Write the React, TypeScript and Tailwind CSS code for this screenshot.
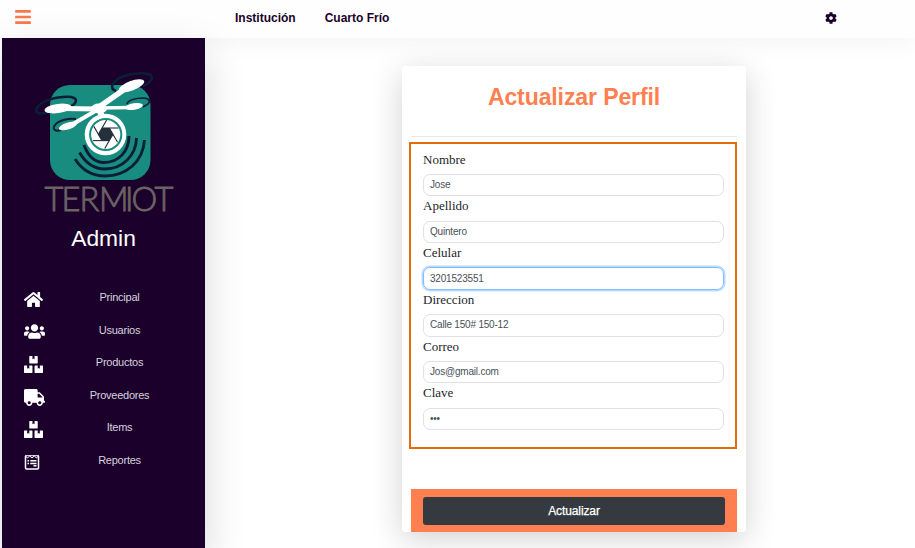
import { FaBars, FaHome, FaUsers, FaBoxes, FaTruck, FaCog } from "react-icons/fa";
import type { ReactNode } from "react";

function Logo() {
  return (
    <svg width="144" height="152" viewBox="32 68 144 152" className="block overflow-visible">
      <rect x="50" y="85" width="100.500" height="95" rx="20" fill="#198c80" />
      <g fill="none" stroke="#0b1e38">
        <g strokeWidth="2.900">
          <path d="M129 136C129 151 119 162.500 104 162.500C95 162.500 88 156 84 145" />
          <path d="M136.500 138C136 156 122 169 105 169C94 169 85 162 79.500 152.500" />
          <path d="M144.500 140C143 162 126 176 105 176C92 176 82 170 75 159" />
        </g>
        <path d="M48 112C39 115 34 113 37 108C41 102 51 98 63 97C74 96 78 99 75 103C74 105 72 106 69 107" strokeWidth="2.600" />
        <path d="M116 91C110 89 111 84 118 79C126 74 140 72 148 74C155 76 152 82 143 86" strokeWidth="2.600" />
        <path d="M127 104C128 100 136 98 143 98C149 98 151 101 148 104L143 107" strokeWidth="1.700" />
        <path d="M61 130C55 132 52 129 55 125C59 120 69 118 76 119" strokeWidth="2" />
      </g>
      <circle cx="105.500" cy="134.500" r="20.800" fill="#fff" />
      <g stroke="#fff" strokeLinecap="round">
        <path d="M122 91L99 107" strokeWidth="5.600" />
        <path d="M62 108.500L98 109" strokeWidth="5" />
        <path d="M98 108L132 107.500" strokeWidth="3.600" />
        <path d="M97 110L73 124" strokeWidth="4" />
        <path d="M99 108L102 117" strokeWidth="6" />
      </g>
      <g fill="#fff">
        <ellipse cx="131.500" cy="85.800" rx="13.500" ry="4.800" transform="rotate(-21 131.500 85.800)" />
        <ellipse cx="58" cy="108.500" rx="13.500" ry="4.600" transform="rotate(-8 58 108.500)" />
        <ellipse cx="134" cy="106.500" rx="9" ry="3.200" transform="rotate(-9 134 106.500)" />
        <ellipse cx="68" cy="126" rx="9.500" ry="3.400" transform="rotate(-18 68 126)" />
        <ellipse cx="99" cy="108.500" rx="8" ry="5" />
      </g>
      <circle cx="105.700" cy="134.500" r="15.600" fill="#fff" stroke="#198c80" strokeWidth="2" />
      <g stroke="#25303c" strokeWidth="1.100" fill="none">
        {[0, 60, 120, 180, 240, 300].map((angle) => (
          <path key={angle} d="M102 128L118.500 128" transform={`rotate(${angle} 105.700 134.300)`} />
        ))}
      </g>
      <path d="M102 128L109.500 128L113 134.500L109 141L102 141L98 134.500Z" fill="#25303c" />
      <text
        x="44.500 61.500 79.500 99 125 131.500 154.500"
        y="210.500"
        fontSize="32.500"
        fontWeight="300"
        fill="#6b6263"
        stroke="#6b6263"
        strokeWidth="0.900"
        className="font-['Lato',sans-serif]"
      >
        TERMIOT
      </text>
    </svg>
  );
}

function ReportIcon() {
  return (
    <svg width="16" height="15" viewBox="0 0 16 15" fill="none" stroke="white" className="block">
      <path d="M1.500 1V13Q1.500 14 2.500 14H13.500Q14.500 14 14.500 13V1" strokeWidth="1.500" />
      <path d="M1 .7H15M1.500 1L3.500 3L5.700 1L8 3L10.300 1L12.500 3L14.500 1" strokeWidth="1" />
      <path d="M3.500 5.800H5M6.300 5.800H12.500M3.500 8.500H5M6.300 8.500H12.500M9.500 10.800H12.500" strokeWidth="1.400" />
    </svg>
  );
}

const menu: { label: string; icon: ReactNode }[] = [
  { label: "Principal", icon: <FaHome size={19} /> },
  { label: "Usuarios", icon: <FaUsers size={21} /> },
  { label: "Productos", icon: <FaBoxes size={19} /> },
  { label: "Proveedores", icon: <FaTruck size={21} /> },
  { label: "Items", icon: <FaBoxes size={19} /> },
  { label: "Reportes", icon: <ReportIcon /> },
];

const fields = [
  { label: "Nombre", value: "Jose" },
  { label: "Apellido", value: "Quintero" },
  { label: "Celular", value: "3201523551", active: true },
  { label: "Direccion", value: "Calle 150# 150-12" },
  { label: "Correo", value: "Jos@gmail.com" },
  { label: "Clave", value: "•••" },
];

export default function App() {
  return (
    <div className="flex h-[548px] w-[915px] flex-col overflow-hidden bg-white font-['Liberation_Sans',Arial,sans-serif]">
      <header className="flex h-[38px] shrink-0 items-center bg-[#fefefe] pb-[2px] pl-[14px] text-[12px] font-bold text-[#1b002c] shadow-[0_4px_24px_rgba(0,0,0,0.05)]">
        <FaBars size={18} className="-mt-[2px] text-[#ff7648]" />
        <nav className="ml-[203px] flex gap-[29px]">
          <a>Institución</a>
          <a>Cuarto Frío</a>
        </nav>
        <FaCog size={12} className="mr-[78px] ml-auto" />
      </header>
      <div className="flex min-h-0 flex-1">
        <aside className="ml-[2px] flex w-[203px] shrink-0 flex-col bg-[#1b002c] pt-[30px] text-white shadow-[0_16px_40px_rgba(0,0,0,0.16)]">
          <div className="pl-[30px]">
            <Logo />
          </div>
          <h2 className="mt-[2px] text-center text-[22.8px] leading-[32px]">Admin</h2>
          <ul className="mt-[27px]">
            {menu.map((item) => (
              <li key={item.label} className="flex h-[32.6px] items-center pl-[22px]">
                <span className="flex w-[30px] pt-[4px]">{item.icon}</span>
                <span className="w-[131px] text-center text-[11px] tracking-[-0.25px] text-[#d8d2dc]">{item.label}</span>
              </li>
            ))}
          </ul>
        </aside>
        <main className="flex flex-1 pt-[28px] pl-[197px]">
          <section className="flex h-[465.5px] w-[344px] flex-col rounded-[3px] bg-white px-[9px] shadow-[0_7px_32px_rgba(0,0,0,0.18)]">
            <h1 className="pt-[15px] text-center text-[23px] leading-[32px] font-bold tracking-[-0.1px] text-[#ff7f50]">
              Actualizar Perfil
            </h1>
            <hr className="mt-[23px] border-[#e9e9e9]" />
            <form className="mt-[5px] -ml-[2px] flex h-[307px] flex-col border-2 border-[#e36c0a] pt-[5.500px] pr-[11px] pl-[12px]">
              {fields.map((field) => (
                <label key={field.label} className="block h-[46.8px] shrink-0">
                  <span className="block h-[24.3px] pt-px font-['Liberation_Serif',serif] text-[13px] leading-[17px] text-[#212529]">
                    {field.label}
                  </span>
                  <input
                    type="text"
                    defaultValue={field.value}
                    className={
                      field.active
                        ? "block h-[22.5px] w-full rounded-[7px] border border-[#80bdff] px-[6px] pb-px text-[10px] tracking-[-0.2px] text-[#495057] shadow-[0_0_0_1.500px_#b8dbff] outline-none"
                        : "block h-[22.5px] w-full rounded-[7px] border border-[#dee1e6] px-[6px] pb-px text-[10px] tracking-[-0.2px] text-[#495057] outline-none"
                    }
                  />
                </label>
              ))}
            </form>
            <div className="mt-auto h-[43px] bg-[#ff7f50] px-[12px] pt-[8px]">
              <button className="block h-[28px] w-full rounded-[3px] bg-[#343a40] text-[12px] tracking-[-0.1px] text-white [-webkit-text-stroke:0.25px_white]">
                Actualizar
              </button>
            </div>
          </section>
        </main>
      </div>
    </div>
  );
}
